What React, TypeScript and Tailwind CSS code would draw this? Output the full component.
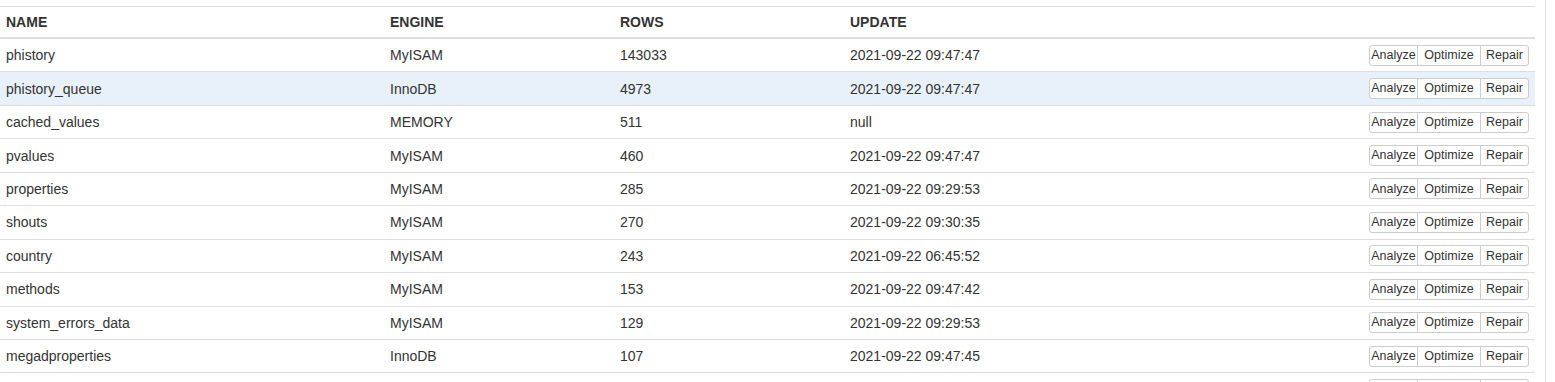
import React from 'react';

type TableRow = { name: string; engine: string; rows: number; update: string };

const tables: TableRow[] = [
  { name: 'phistory', engine: 'MyISAM', rows: 143033, update: '2021-09-22 09:47:47' },
  { name: 'phistory_queue', engine: 'InnoDB', rows: 4973, update: '2021-09-22 09:47:47' },
  { name: 'cached_values', engine: 'MEMORY', rows: 511, update: 'null' },
  { name: 'pvalues', engine: 'MyISAM', rows: 460, update: '2021-09-22 09:47:47' },
  { name: 'properties', engine: 'MyISAM', rows: 285, update: '2021-09-22 09:29:53' },
  { name: 'shouts', engine: 'MyISAM', rows: 270, update: '2021-09-22 09:30:35' },
  { name: 'country', engine: 'MyISAM', rows: 243, update: '2021-09-22 06:45:52' },
  { name: 'methods', engine: 'MyISAM', rows: 153, update: '2021-09-22 09:47:42' },
  { name: 'system_errors_data', engine: 'MyISAM', rows: 129, update: '2021-09-22 09:29:53' },
  { name: 'megadproperties', engine: 'InnoDB', rows: 107, update: '2021-09-22 09:47:45' },
];

const ActionButtons = () => (
  <div className="flex h-[21px] text-[12.5px] leading-none text-[#333]">
    <button className="w-[49px] h-full border border-[#ccc] rounded-l-[3px] bg-white">Analyze</button>
    <button className="w-[64px] h-full -ml-px border border-[#ccc] bg-white">Optimize</button>
    <button className="w-[49px] h-full -ml-px border border-[#ccc] rounded-r-[3px] bg-white">Repair</button>
  </div>
);

export default function App() {
  return (
    <div className="w-[1546px] min-h-[382px] bg-white border-r border-[#ddd] pt-[6px] font-['Liberation_Sans',Arial,sans-serif] text-[14px] text-[#333]">
      <div className="w-[1535px]">
        <div className="grid grid-cols-[384px_230px_230px_1fr] h-[33px] items-center border-t border-b-2 border-[#ddd] font-bold">
          <div className="px-[6px]">NAME</div>
          <div className="px-[6px]">ENGINE</div>
          <div className="px-[6px]">ROWS</div>
          <div className="px-[6px]">UPDATE</div>
        </div>
        {tables.map((t, i) => (
          <div
            key={t.name}
            className={`grid grid-cols-[384px_230px_230px_1fr] h-[33.44px] items-center border-b border-[#ddd] ${i === 1 ? 'bg-[#e8f1fa]' : ''}`}
          >
            <div className="px-[6px] pt-px">{t.name}</div>
            <div className="px-[6px] pt-px">{t.engine}</div>
            <div className="px-[6px] pt-px">{t.rows}</div>
            <div className="px-[6px] flex items-center justify-between">
              <span className="pt-px">{t.update}</span>
              <ActionButtons />
            </div>
          </div>
        ))}
        {/* next row only peeks in at the bottom edge */}
        <div className="flex justify-end pr-[6px] pt-[6px] h-[33.44px]">
          <ActionButtons />
        </div>
      </div>
    </div>
  );
}
